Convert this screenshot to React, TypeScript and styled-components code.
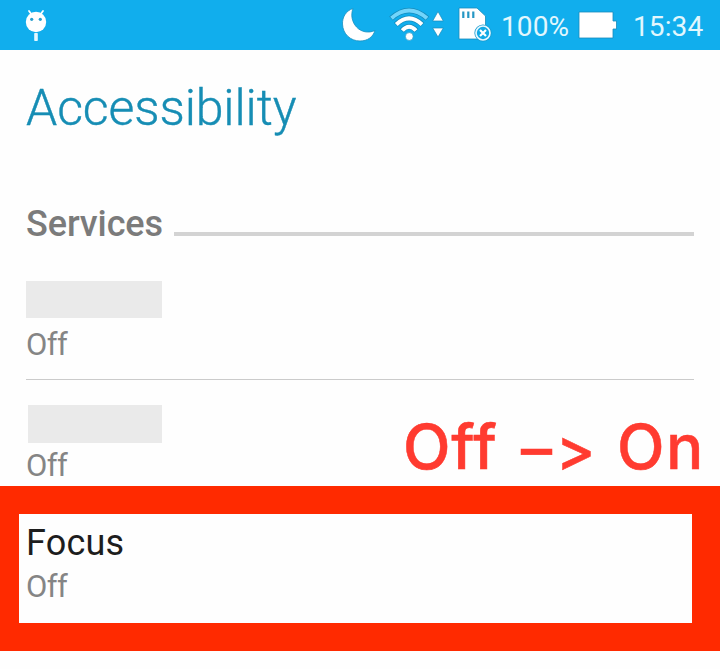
import React from "react";
import styled, { createGlobalStyle } from "styled-components";

const GlobalStyle = createGlobalStyle`
  * { box-sizing: border-box; }
  html, body { margin: 0; overflow: hidden; background: #fefefe; }
`;

const Screen = styled.main`
  display: flex;
  flex-direction: column;
  width: 720px;
  height: 669px;
  overflow: hidden;
  background: #fefefe;
  font-family: Roboto, sans-serif;
`;

const StatusBar = styled.header`
  display: flex;
  align-items: flex-start;
  flex: none;
  height: 50px;
  padding-left: 24px;
  background: #11aeed;
`;

const Icon = styled.svg<{ $gap?: number }>`
  flex: none;
  display: block;
  margin-left: ${(p) => p.$gap ?? 0}px;
`;

const StatusText = styled.span<{ $gap: number }>`
  margin-left: ${(p) => p.$gap}px;
  font-size: 28px;
  line-height: 54px;
  letter-spacing: 0.1px;
  color: #e2f7fd;
  white-space: nowrap;
`;

const TitleBar = styled.div`
  height: 108px;
  flex: none;
  padding: 28px 26px 0;
`;

const Title = styled.h1`
  margin: 0;
  font-size: 50px;
  font-weight: 300;
  line-height: 60px;
  letter-spacing: -0.12px;
  color: #168db4;
  -webkit-text-stroke: 0.4px #168db4;
`;

const SectionHeader = styled.div`
  display: flex;
  flex: none;
  height: 100px;
  padding: 46px 26px 0;
`;

const SectionTitle = styled.h2`
  width: 148px;
  margin: 0;
  font-size: 36px;
  font-weight: 500;
  line-height: 40px;
  letter-spacing: -0.1px;
  color: #7b7b7b;
`;

const SectionRule = styled.div`
  flex: 1;
  height: 4px;
  margin-top: 28px;
  background: #d3d3d3;
`;

const Row = styled.section<{ $height: number; $top: number; $divider?: boolean }>`
  position: relative;
  flex: none;
  height: ${(p) => p.$height}px;
  margin: 0 26px;
  padding-top: ${(p) => p.$top}px;
  border-bottom: ${(p) => (p.$divider ? "1px solid #cbcbcb" : "0")};
`;

const Redaction = styled.div<{ $inset?: number; $gap: number; $height: number }>`
  width: ${(p) => 136 - (p.$inset ?? 0)}px;
  height: ${(p) => p.$height}px;
  margin: 0 0 ${(p) => p.$gap}px ${(p) => p.$inset ?? 0}px;
  background: #eaeaea;
`;

const State = styled.p`
  margin: 0;
  font-size: 31px;
  line-height: 36px;
  letter-spacing: -0.6px;
  color: #858585;
`;

const Annotation = styled.div`
  position: absolute;
  left: 377px;
  top: 27px;
  display: flex;
  font-family: Inter, sans-serif;
  font-size: 62px;
  font-weight: 500;
  line-height: 80px;
  font-feature-settings: "calt" 0;
  color: #ff3b30;
  -webkit-text-stroke: 0.5px #ff3b30;
  white-space: nowrap;
`;

const Part = styled.span<{ $width: number; $spacing?: number }>`
  width: ${(p) => p.$width}px;
  letter-spacing: ${(p) => p.$spacing ?? 0}px;
`;

const Dash = styled(Part)`
  padding-top: 2px;
`;

const Arrowhead = styled(Part)`
  padding-top: 2px;
  font-size: 59px;
`;

const Highlight = styled.section`
  flex: none;
  height: 165px;
  padding: 8px 0 0 7px;
  border: solid #ff2a00;
  border-width: 28px 28px 28px 19px;
`;

const ItemTitle = styled.h3`
  margin: 0 0 5px;
  font-size: 36px;
  font-weight: 400;
  line-height: 42px;
  letter-spacing: 0.2px;
  color: #1d1d1d;
`;

const Debug = () => (
  <Icon width="24" height="50" viewBox="24 0 24 50">
    <path d="M29 11l3 4M43 11l-3 4" stroke="#fff" strokeWidth="1.8" strokeLinecap="round" />
    <circle cx="36" cy="22" r="10.2" fill="#fff" />
    <circle cx="31.7" cy="19.3" r="1.6" fill="#289fce" />
    <circle cx="40.3" cy="19.3" r="1.6" fill="#289fce" />
    <rect x="34.2" y="33" width="3.6" height="8" rx=".7" fill="#e5f8ff" />
  </Icon>
);

const Moon = () => (
  <Icon $gap={292} width="40" height="50" viewBox="340 0 40 50">
    <path
      d="M353 8.500C345.500 11 342.300 17.500 342.500 24C342.800 34 350.500 41 360 41C367.500 41 373 37 375 30.500C368.500 33.500 361 32 356.500 27C352 22 350.500 15 353 8.500Z"
      fill="#fff"
      stroke="#178fc0"
      strokeWidth=".8"
    />
  </Icon>
);

const Wifi = () => (
  <Icon $gap={8} width="58" height="50" viewBox="388 0 58 50">
    <g fill="none" strokeLinecap="butt">
      <path d="M391 18.500Q409 2.500 427.500 18.500M395.800 24.800Q409 12 422.500 24.800M401.800 30.800Q409 22.500 416.500 30.800" stroke="#168bbb" strokeWidth="5.4" />
      <path d="M391.500 18.200Q409 2.800 427 18.200" stroke="#72d5fb" strokeWidth="4" />
      <path d="M396.300 24.500Q409 12.300 422 24.500M402.300 30.500Q409 22.800 416 30.500" stroke="#fff" strokeWidth="4" />
    </g>
    <circle cx="409.300" cy="36.500" r="3.900" fill="#fff" stroke="#168bbb" strokeWidth=".6" />
    <path d="M438 11.500L443.300 21H432.700ZM432.700 28H443.300L438 37Z" fill="#fff" stroke="#168bbb" strokeWidth=".7" />
  </Icon>
);

const SdCard = () => (
  <Icon $gap={10} width="36" height="50" viewBox="456 0 36 50">
    <path d="M459 8H477L485.500 16V39H459Z" fill="#fff" stroke="#168bbb" strokeWidth=".8" />
    <path d="M463.300 11.500V18M468.300 11.500V18M473.300 11.500V18" stroke="#2697c4" strokeWidth="2.2" />
    <circle cx="483" cy="33" r="8.600" fill="#1599cd" />
    <circle cx="483" cy="33" r="7" fill="#11a9e5" stroke="#e5f7ff" strokeWidth="1.700" />
    <path d="M480 30L486 36M486 30L480 36" stroke="#fff" strokeWidth="2.2" />
  </Icon>
);

const Battery = () => (
  <Icon $gap={8} width="41" height="50" viewBox="578 0 41 50">
    <path d="M579 12H613V21H616.500V29H613V38H579Z" fill="#fff" stroke="#168bbb" strokeWidth=".8" />
  </Icon>
);

const BatteryLevel = styled.div`
  width: 78px;
  flex: none;
`;

export default function App() {
  return (
    <Screen>
      <GlobalStyle />
      <StatusBar>
        <Debug />
        <Moon />
        <Wifi />
        <SdCard />
        <BatteryLevel>
          <StatusText $gap={9}>100%</StatusText>
        </BatteryLevel>
        <Battery />
        <StatusText $gap={14}>15:34</StatusText>
      </StatusBar>
      <TitleBar>
        <Title>Accessibility</Title>
      </TitleBar>
      <SectionHeader>
        <SectionTitle>Services</SectionTitle>
        <SectionRule />
      </SectionHeader>
      <Row $height={122} $top={23} $divider>
        <Redaction $height={37} $gap={9} />
        <State>Off</State>
      </Row>
      <Row $height={106} $top={25}>
        <Redaction $inset={2} $height={38} $gap={5} />
        <State>Off</State>
        <Annotation>
          <Part $width={118} $spacing={0.8}>Off</Part>
          <Dash $width={35}>–</Dash>
          <Arrowhead $width={61}>&gt;</Arrowhead>
          <Part $width={90} $spacing={1.5}>On</Part>
        </Annotation>
      </Row>
      <Highlight>
        <ItemTitle>Focus</ItemTitle>
        <State>Off</State>
      </Highlight>
    </Screen>
  );
}
